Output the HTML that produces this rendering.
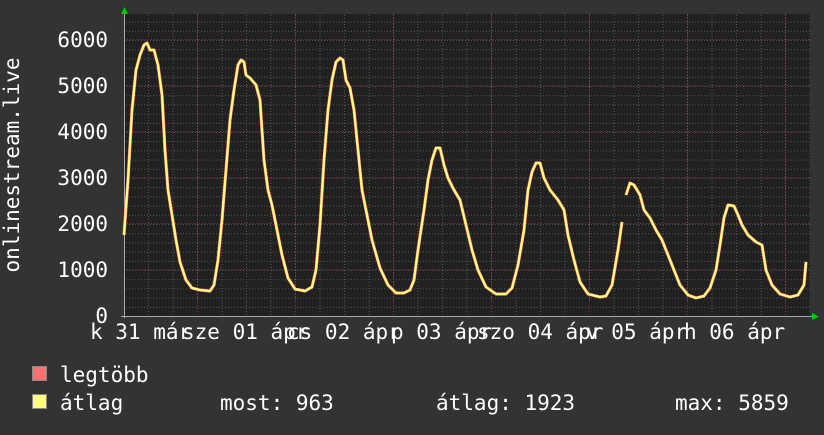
<!DOCTYPE html>
<html><head><meta charset="utf-8"><style>
html,body{margin:0;padding:0;background:#333;}
body{width:824px;height:430px;overflow:hidden;}
svg text{font-family:"DejaVu Sans Mono","Liberation Mono",monospace;fill:#fff;}
</style></head><body>
<svg width="824" height="430" viewBox="0 0 824 430" xmlns="http://www.w3.org/2000/svg">
<rect width="824" height="430" fill="#333"/>
<rect x="124" y="14" width="686" height="302" fill="#212121"/>
<defs>
<pattern id="hm" x="0" y="316" width="686" height="9.2" patternUnits="userSpaceOnUse">
<line x1="0" y1="0.5" x2="686" y2="0.5" stroke="#555" stroke-dasharray="1,2"/>
</pattern>
<pattern id="vm" x="123.5" y="0" width="24.5" height="302" patternUnits="userSpaceOnUse">
<line x1="0.5" y1="0" x2="0.5" y2="302" stroke="#555" stroke-dasharray="1,2"/>
</pattern>
</defs>
<rect x="124" y="14" width="686" height="302" fill="url(#hm)"/>
<rect x="124" y="14" width="686" height="302" fill="url(#vm)"/>
<g stroke="#7a3a3a" stroke-dasharray="1,2">
<line x1="124" y1="39.5" x2="810" y2="39.5"/><line x1="124" y1="85.5" x2="810" y2="85.5"/>
<line x1="124" y1="131.5" x2="810" y2="131.5"/><line x1="124" y1="177.5" x2="810" y2="177.5"/>
<line x1="124" y1="223.5" x2="810" y2="223.5"/><line x1="124" y1="269.5" x2="810" y2="269.5"/>
<line x1="197.5" y1="14" x2="197.5" y2="316"/><line x1="295.5" y1="14" x2="295.5" y2="316"/>
<line x1="393.5" y1="14" x2="393.5" y2="316"/><line x1="491.5" y1="14" x2="491.5" y2="316"/>
<line x1="589.5" y1="14" x2="589.5" y2="316"/><line x1="687.5" y1="14" x2="687.5" y2="316"/>
<line x1="785.5" y1="14" x2="785.5" y2="316"/>
</g>
<line x1="121" y1="316.5" x2="814" y2="316.5" stroke="#aaa"/>
<line x1="124.5" y1="10" x2="124.5" y2="318" stroke="#aaa"/>
<polygon points="121,14 124.5,7 128,14" fill="#0c0"/>
<polygon points="812,313 819,316.5 812,320" fill="#0c0"/>
<g fill="none" stroke-linejoin="round">
<polyline stroke="#ff7070" stroke-width="3.2" points="124,235 128,180 132,110 136,70 140,55 144,45 147,43 150,50 154,50 158,65 162,95 165,150 168,190 172,215 176,240 180,262 186,280 192,288 200,290 210,291 214,285 218,260 222,220 226,170 230,120 234,90 238,65 241,60 244,62 246,75 250,78 256,85 260,100 264,160 268,190 272,205 276,225 282,255 288,278 295,289 305,291 312,287 316,270 320,225 324,160 328,110 332,80 336,62 340,58 343,60 346,80 350,88 354,110 358,150 362,190 366,210 372,240 380,268 388,285 396,293 404,293 410,290 414,280 418,250 424,210 428,180 432,160 436,148 440,148 444,165 448,178 454,190 460,200 466,225 472,250 478,270 486,287 496,294 506,294 512,288 518,265 524,230 528,190 532,172 536,163 540,163 544,178 550,190 558,200 564,210 568,235 574,260 580,282 588,294 600,297 606,296 612,285 618,250 622,222"/>
<polyline stroke="#ff7070" stroke-width="3.2" points="626,195 630,183 634,185 640,195 644,210 650,218 656,230 662,240 668,255 674,270 680,285 688,295 696,298 704,296 710,288 716,270 720,245 724,218 728,205 734,206 738,215 742,225 748,235 756,242 762,245 766,270 772,285 780,294 790,297 798,295 804,285 806,262"/>
<polyline stroke="#ffff80" stroke-width="2.2" points="124,235 128,180 132,110 136,70 140,55 144,45 147,43 150,50 154,50 158,65 162,95 165,150 168,190 172,215 176,240 180,262 186,280 192,288 200,290 210,291 214,285 218,260 222,220 226,170 230,120 234,90 238,65 241,60 244,62 246,75 250,78 256,85 260,100 264,160 268,190 272,205 276,225 282,255 288,278 295,289 305,291 312,287 316,270 320,225 324,160 328,110 332,80 336,62 340,58 343,60 346,80 350,88 354,110 358,150 362,190 366,210 372,240 380,268 388,285 396,293 404,293 410,290 414,280 418,250 424,210 428,180 432,160 436,148 440,148 444,165 448,178 454,190 460,200 466,225 472,250 478,270 486,287 496,294 506,294 512,288 518,265 524,230 528,190 532,172 536,163 540,163 544,178 550,190 558,200 564,210 568,235 574,260 580,282 588,294 600,297 606,296 612,285 618,250 622,222"/>
<polyline stroke="#ffff80" stroke-width="2.2" points="626,195 630,183 634,185 640,195 644,210 650,218 656,230 662,240 668,255 674,270 680,285 688,295 696,298 704,296 710,288 716,270 720,245 724,218 728,205 734,206 738,215 742,225 748,235 756,242 762,245 766,270 772,285 780,294 790,297 798,295 804,285 806,262"/>
</g>
<g font-size="21" text-anchor="end">
<text x="108" y="47">6000</text><text x="108" y="93">5000</text>
<text x="108" y="139">4000</text><text x="108" y="185">3000</text>
<text x="108" y="231">2000</text><text x="108" y="277">1000</text>
<text x="108" y="323">0</text>
</g>
<text font-size="21" transform="translate(19,165) rotate(-90)" text-anchor="middle">onlinestream.live</text>
<g font-size="21">
<text x="90" y="339">k 31 már</text>
<text x="182" y="339">sze 01 ápr</text>
<text x="287" y="339">cs 02 ápr</text>
<text x="391" y="339">p 03 ápr</text>
<text x="477" y="339">szo 04 ápr</text>
<text x="586" y="339">v 05 ápr</text>
<text x="684" y="339">h 06 ápr</text>
<rect x="32.5" y="366.5" width="14" height="14" fill="#ff7070" stroke="#888"/>
<text x="60" y="382">legtöbb</text>
<rect x="32.5" y="394.5" width="14" height="14" fill="#ffff80" stroke="#888"/>
<text x="60" y="410">átlag</text>
<text x="220" y="410">most: 963</text>
<text x="436" y="410">átlag: 1923</text>
<text x="675" y="410">max: 5859</text>
</g>
</svg>
</body></html>
